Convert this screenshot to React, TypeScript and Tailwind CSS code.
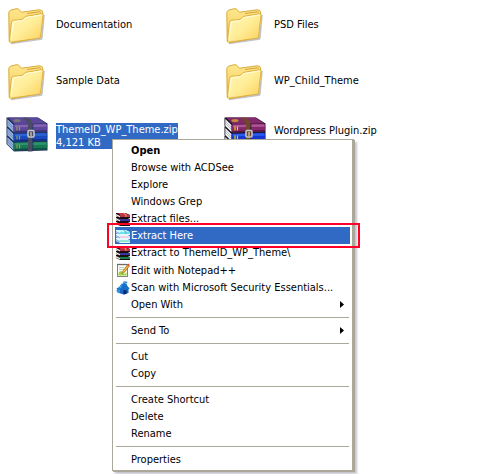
import { Fragment, type ReactNode } from "react";

function FolderIcon() {
  return (
    <svg className="my-[3px] ml-0.5 h-[38px] w-[38px]" viewBox="0 0 38 38" aria-hidden="true">
      <defs>
        <linearGradient id="folderFront" x1="0" y1="0" x2="1" y2="1">
          <stop offset="0" stopColor="#fff8b8" />
          <stop offset="0.5" stopColor="#ffed98" />
          <stop offset="1" stopColor="#fbd05a" />
        </linearGradient>
        <linearGradient id="folderBack" x1="0" y1="0" x2="0" y2="1">
          <stop offset="0" stopColor="#ffe78e" />
          <stop offset="1" stopColor="#efc34c" />
        </linearGradient>
      </defs>
      <path d="M3 35.500 L33.500 31 L36 7 L34 29.500 L6 34Z" fill="#777" stroke="#aaa" strokeWidth="1.500" opacity="0.7" />
      <path
        d="M1.200 33.500 L0.800 5 Q0.800 3 3 2 L8 0.800 Q10.500 0.400 11.500 2 L13.500 4.200 L31 1.800 Q34.800 1.600 34.800 5 L32 29.500 L3.500 34.500Z"
        fill="url(#folderBack)"
        stroke="#d8aa38"
        strokeWidth="1"
      />
      <path d="M19 5.500 L31.500 3.800 L32.800 4.500" fill="none" stroke="#cfa03a" strokeWidth="1" />
      <path
        d="M2.500 34.300 Q1.400 34 1.600 31.500 L3.400 14.500 Q3.800 12.600 5.600 12.300 L14 11.500 L17.500 8.400 L33.800 5.600 Q35.300 5.500 35.100 7.200 L32.600 28.500 Q32.300 30 30.800 30.200Z"
        fill="url(#folderFront)"
        stroke="#deb03e"
        strokeWidth="1"
      />
      <path d="M3.300 31 L5 14.800 Q5.300 13.600 6.300 13.500 L14.500 12.600 L18 9.500 L33.500 7" fill="none" stroke="#fffde0" strokeWidth="1" />
    </svg>
  );
}

type Palette = { top: string[]; mid: string[]; low: string[]; page: string; edge: string; belt: string; gold: string };

const vivid: Palette = {
  top: ["#84286c", "#b0549a", "#5d1549"],
  mid: ["#1537d0", "#2b5cf0", "#0a1c80"],
  low: ["#0d7a3d", "#2ba765", "#06502a"],
  page: "#f1f3f8",
  edge: "#17171f",
  belt: "#70482a",
  gold: "#e6d213",
};

const dimmed: Palette = {
  top: ["#5d479c", "#8564b6", "#40317a"],
  mid: ["#1b48bd", "#2c62d2", "#102c80"],
  low: ["#19784f", "#2b946e", "#0e4b4b"],
  page: "#93b2e3",
  edge: "#1d3159",
  belt: "#4a4c61",
  gold: "#8e9d50",
};

function ArchiveIcon({ palette }: { palette: Palette }) {
  const books = [
    { y: 18, c: palette.low },
    { y: 9, c: palette.mid },
    { y: 0, c: palette.top },
  ];
  return (
    <svg className="h-[36px] w-[42px]" viewBox="0 0 42 36" aria-hidden="true">
      {books.map(({ y, c }) => (
        <g key={y} transform={`translate(0 ${y})`}>
          <path d="M0.500 0.500 L32 0.500 L41.500 6.500 L41.500 15.500 L8 16.500 L0.500 9Z" fill={palette.edge} />
          <path d="M1.300 2 L7.500 8 L7.500 15 L1.300 9Z" fill={palette.page} />
          <path d="M1.500 4.500 L7.500 10.500 M1.500 6.500 L7.500 12.500" stroke={palette.edge} strokeWidth="0.500" opacity="0.45" />
          <path d="M2 0.600 L31.500 0.600 L40.500 6.500 L8.500 7Z" fill={c[0]} />
          <path d="M8 7.500 L40.500 7 Q42 10.500 40.500 14.500 L8.500 15.500 Q6.500 11 8 7.500Z" fill={c[0]} />
          <path d="M9 9 L40.500 8.500" stroke={c[1]} strokeWidth="2.400" />
          <path d="M9 14.600 L40.500 13.800" stroke={c[2]} strokeWidth="1.500" />
          <path d="M11 9.500 V13.500 M13.500 9.500 V13.500" stroke={palette.gold} strokeWidth="1.200" />
        </g>
      ))}
      <ellipse cx="11" cy="3.500" rx="3.500" ry="1.500" fill={palette.gold} opacity="0.6" />
      <path d="M19 0.500 Q26.500 2 26.500 7 L26.500 34.500 L22 34.500 L22 8 Q21 4 16.500 1Z" fill={palette.belt} />
      <path d="M26.800 7 V34" stroke={palette.edge} strokeWidth="0.800" />
      <rect x="22" y="13.500" width="6" height="6.500" rx="1" fill={palette.belt} stroke="#c8cad0" strokeWidth="1.500" />
      <path d="M25 15 V19" stroke="#d9d3bd" strokeWidth="1.200" />
    </svg>
  );
}

function BooksIcon({ inverted = false }: { inverted?: boolean }) {
  const fronts = inverted ? ["#6fe3e6", "#f4cfe6", "#8fecd4"] : ["#b8304a", "#3c35a0", "#14804a"];
  const edge = inverted ? "#e6fbff" : "#1c0d12";
  const page = inverted ? "#8fb4e8" : "#f2efe2";
  return (
    <svg className="h-[14px] w-[14px]" viewBox="0 0 14 14" aria-hidden="true">
      {[2, 1, 0].map((i) => (
        <g key={i} transform={`translate(0 ${i * 4})`}>
          <path d="M0 1 H9.500 L14 3 V6 H4 L0 4Z" fill={edge} />
          <path d="M0 2 L4 4 V5.500 L0 3.500Z" fill={page} />
          <path d="M4 4 H14" stroke={fronts[i]} strokeWidth="2" />
        </g>
      ))}
      <path d="M1.500 1 H9.300 L12.800 3 H4.500Z" fill={inverted ? "#b5fbfa" : "#cc3348"} />
      <path d="M7.500 1 L10 3 V5" stroke={inverted ? "#6f9fe0" : "#e0b04f"} strokeWidth="1" fill="none" />
    </svg>
  );
}

function NotepadIcon() {
  return (
    <svg className="h-[14px] w-[14px]" viewBox="0 0 14 14" aria-hidden="true">
      <rect x="1.500" y="1.500" width="10" height="12" fill="#fbfdf4" stroke="#85857c" />
      <path d="M1.500 1.500 H11" stroke="#55554f" strokeWidth="1.500" strokeDasharray="1 1" />
      <path d="M3 4.500 H8 M3 6.500 H8" stroke="#b9bbb0" strokeWidth="0.800" />
      <path d="M2.500 10 Q4.500 6.500 6.500 9.500 T10.500 9 V12.500 H2.500Z" fill="#9ed33a" />
      <path d="M6.500 8.500 L11.500 1.800 L13.300 3.200 L8.200 9.600 L6 10.500Z" fill="#f1b335" stroke="#8c5a1c" strokeWidth="0.600" />
      <path d="M11.300 2 L12.300 0.600 L13.800 1.900 L13 3.300Z" fill="#d94732" />
    </svg>
  );
}

function SecurityIcon() {
  return (
    <svg className="h-[14px] w-[14px]" viewBox="0 0 14 14" aria-hidden="true">
      <path d="M8 0.500 V3" stroke="#174b94" strokeWidth="1" />
      <path d="M8.300 0.300 L11.500 0.800 L11 2.500 L8.300 2.200Z" fill="#2e8be0" />
      <path d="M2.500 7.500 L12.500 6.500 V12 L8 13.500 L2.500 12Z" fill="#1b66c4" />
      <path d="M0.500 7.500 Q4 6 5.500 2.800 Q9 1.800 10.500 3 Q11.500 6 13.700 7.300 L12 8.500 L6 8.200 L1.500 9.200Z" fill="#1670c8" />
      <path d="M5.500 3.200 L3 7.500 L5 7 L6.500 3Z" fill="#4aa6e6" />
      <path d="M0.500 9 L4 8.500 V12 L1 11.500Z" fill="#3294dc" />
      <path d="M7.500 9.500 Q9 8.500 10.500 9.800 V12.800 L7.500 13.500Z" fill="#0a2a63" />
    </svg>
  );
}

type MenuEntry = { label: string; icon?: ReactNode; bold?: boolean; submenu?: boolean; active?: boolean; tall?: boolean };

const groups: MenuEntry[][] = [
  [
    { label: "Open", bold: true },
    { label: "Browse with ACDSee" },
    { label: "Explore" },
    { label: "Windows Grep" },
    { label: "Extract files...", icon: <BooksIcon /> },
    { label: "Extract Here", icon: <BooksIcon inverted />, active: true },
    { label: "Extract to ThemeID_WP_Theme\\", icon: <BooksIcon /> },
    { label: "Edit with Notepad++", icon: <NotepadIcon />, tall: true },
    { label: "Scan with Microsoft Security Essentials...", icon: <SecurityIcon /> },
    { label: "Open With", submenu: true },
  ],
  [{ label: "Send To", submenu: true }],
  [{ label: "Cut" }, { label: "Copy" }],
  [{ label: "Create Shortcut" }, { label: "Delete" }, { label: "Rename" }],
  [{ label: "Properties" }],
];

function MenuItem({ label, icon, bold, submenu, active, tall }: MenuEntry) {
  return (
    <button
      type="button"
      role="menuitem"
      className={`relative flex w-full items-center text-left whitespace-nowrap ${tall ? "h-[18px]" : "h-[17px]"} ${
        bold ? "font-bold" : ""
      } ${active ? "bg-[#316ac5] text-white" : ""}`}
    >
      <span className="flex w-4 shrink-0 justify-center">{icon}</span>
      <span className="flex-1 leading-[17px]">{label}</span>
      {submenu && (
        <svg className="mr-1.5 h-[7px] w-1" viewBox="0 0 4 7" aria-hidden="true">
          <path d="M0 0 L4 3.500 L0 7Z" fill="#000" />
        </svg>
      )}
      {active && <span className="absolute -inset-y-1 -right-2.5 -left-2 z-10 border-2 border-[#ff0026]" />}
    </button>
  );
}

type FileEntry = { name: string; icon: ReactNode; size?: string; selected?: boolean; labelClass: string };

function FileItem({ name, icon, size, selected, labelClass }: FileEntry) {
  return (
    <button type="button" className="flex w-full items-center text-left">
      <span className="w-[50px] shrink-0">{icon}</span>
      <span className={labelClass}>
        <span className={`block leading-[13px] whitespace-nowrap ${selected ? "bg-[#316ac5] text-white" : ""}`}>
          {name}
          {size && <span className="block">{size}</span>}
        </span>
      </span>
    </button>
  );
}

export default function App() {
  return (
    <main className="relative min-h-screen bg-white font-['Tahoma','DejaVu_Sans_Condensed',sans-serif] text-[11px] text-black [&_svg]:block">
      <div className="grid grid-cols-[218px_1fr] gap-y-3 pt-[5px] pl-1.5">
        <FileItem name="Documentation" icon={<FolderIcon />} labelClass="pb-1.5" />
        <FileItem name="PSD Files" icon={<FolderIcon />} labelClass="pb-1.5" />
        <FileItem name="Sample Data" icon={<FolderIcon />} labelClass="pb-1.5" />
        <FileItem name="WP_Child_Theme" icon={<FolderIcon />} labelClass="pb-1.5" />
        <FileItem
          name="ThemeID_WP_Theme.zip"
          size="4,121 KB"
          selected
          icon={<ArchiveIcon palette={dimmed} />}
          labelClass="pt-0.5"
        />
        <FileItem name="Wordpress Plugin.zip" icon={<ArchiveIcon palette={vivid} />} labelClass="pb-2.5" />
      </div>
      <div
        role="menu"
        className="absolute top-[139px] left-[112px] w-[242px] border border-r-2 border-[#aca899] bg-white p-0.5 shadow-[1px_1px_0_#aca899,3px_3px_2px_#c4c4cc]"
      >
        {groups.map((items, i) => (
          <Fragment key={i}>
            {i > 0 && <hr className="mx-px my-1 border-t border-[#aca899]" />}
            {items.map((item) => (
              <MenuItem key={item.label} {...item} />
            ))}
          </Fragment>
        ))}
      </div>
    </main>
  );
}
